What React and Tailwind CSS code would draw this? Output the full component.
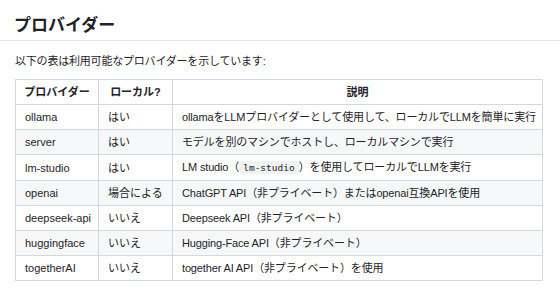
import React from 'react';

const rows = [
  { name: 'ollama', local: 'はい', desc: 'ollamaをLLMプロバイダーとして使用して、ローカルでLLMを簡単に実行' },
  { name: 'server', local: 'はい', desc: 'モデルを別のマシンでホストし、ローカルマシンで実行' },
  { name: 'lm-studio', local: 'はい', desc: null },
  { name: 'openai', local: '場合による', desc: 'ChatGPT API（非プライベート）またはopenai互換APIを使用' },
  { name: 'deepseek-api', local: 'いいえ', desc: 'Deepseek API（非プライベート）' },
  { name: 'huggingface', local: 'いいえ', desc: 'Hugging-Face API（非プライベート）' },
  { name: 'togetherAI', local: 'いいえ', desc: 'together AI API（非プライベート）を使用' },
];

const cell = 'border border-[#d1d9e0] px-[9px] py-[5px] leading-[14px] text-left font-normal whitespace-nowrap overflow-hidden';
const head = 'border border-[#d1d9e0] px-[4px] py-[5px] leading-[14px] text-center font-bold whitespace-nowrap overflow-hidden';

const App = () => {
  return (
    <div className="w-[560px] h-[290px] bg-white text-[#1f2328] font-['Liberation_Sans','Noto_Sans_CJK_JP',sans-serif] overflow-hidden">
      {/* Title */}
      <h1 className="pl-[14px] pt-[14px] pb-[2px] text-[17px] leading-[24px] font-bold border-b border-[#e5e9ed]">
        プロバイダー
      </h1>

      <div className="px-[15px]">
        <p className="mt-[12px] mb-[10px] text-[11px] leading-[16px] tracking-[-0.2px]">
          以下の表は利用可能なプロバイダーを示しています:
        </p>

        <table className="w-[528px] border-collapse text-[11px] table-fixed">
          <colgroup>
            <col className="w-[83px]" />
            <col className="w-[74px]" />
            <col />
          </colgroup>
          <thead>
            <tr className="bg-white">
              <th className={head}>プロバイダー</th>
              <th className={head}>ローカル?</th>
              <th className={head}>説明</th>
            </tr>
          </thead>
          <tbody>
            {rows.map((r, i) => (
              <tr key={r.name} className={i % 2 === 1 ? 'bg-[#f6f8fa]' : 'bg-white'}>
                <td className={cell}>{r.name}</td>
                <td className={cell}>{r.local}</td>
                <td className={cell + ' tracking-[-0.15px]'}>
                  {r.desc ?? (
                    <>
                      LM studio（
                      <code className="px-[4px] py-[1px] rounded-[4px] bg-[#eff1f3] text-[9.5px] tracking-normal font-['DejaVu_Sans_Mono',monospace]">
                        lm-studio
                      </code>
                      ）を使用してローカルでLLMを実行
                    </>
                  )}
                </td>
              </tr>
            ))}
          </tbody>
        </table>
      </div>
    </div>
  );
};

export default App;
